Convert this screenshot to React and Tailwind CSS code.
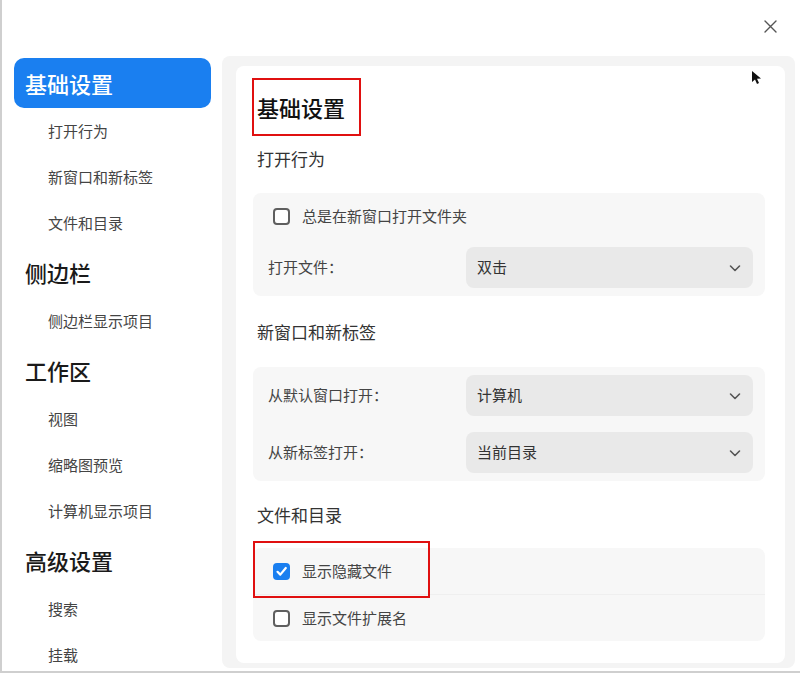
import React from 'react';

const sidebar = [
  { title: '基础设置', active: true, items: ['打开行为', '新窗口和新标签', '文件和目录'] },
  { title: '侧边栏', items: ['侧边栏显示项目'] },
  { title: '工作区', items: ['视图', '缩略图预览', '计算机显示项目'] },
  { title: '高级设置', items: ['搜索', '挂载'] },
];

const Chevron = () => (
  <svg width="14" height="14" viewBox="0 0 14 14" fill="none" stroke="#555" strokeWidth="1.6" strokeLinecap="round" strokeLinejoin="round">
    <path d="M2.5 5l4.5 4.5L11.5 5" />
  </svg>
);

const Checkbox = ({ checked }) => (
  checked ? (
    <span className="w-[17px] h-[17px] rounded-[4px] bg-[#1a7ff0] flex items-center justify-center">
      <svg width="13" height="13" viewBox="0 0 13 13" fill="none" stroke="white" strokeWidth="2.2" strokeLinecap="round" strokeLinejoin="round">
        <path d="M2.5 6.8l2.8 2.8L10.8 3" />
      </svg>
    </span>
  ) : (
    <span className="w-[17px] h-[17px] rounded-[4px] border-2 border-[#5f5f5f] bg-white" />
  )
);

const SelectRow = ({ label, value }) => (
  <div className="flex items-center py-[8px] pl-[15px] pr-[12px]">
    <span className="w-[198px] text-[15px] text-[#444]">{label}</span>
    <div className="flex-1 h-[41px] rounded-lg bg-[#e9e9e9] flex items-center justify-between pl-[11px] pr-[11px]">
      <span className="text-[15px] text-[#333]">{value}</span>
      <Chevron />
    </div>
  </div>
);

const CheckRow = ({ label, checked }) => (
  <div className="h-[46px] flex items-center pl-[20px] gap-[12px]">
    <Checkbox checked={checked} />
    <span className="text-[15px] text-[#444]">{label}</span>
  </div>
);

const SectionTitle = ({ children, className = '' }) => (
  <div className={`h-[38px] flex items-center pl-[21px] text-[17px] text-[#333] ${className}`}>{children}</div>
);

export default function App() {
  return (
    <div className="w-[800px] h-[673px] bg-white flex flex-col border-l-2 border-b-2 border-[#cfcfcf] font-['Noto_Sans_CJK_SC',sans-serif] overflow-hidden">
      <div className="h-[56px] shrink-0 flex justify-end items-start pt-[19px] pr-[22px]">
        <svg width="15" height="15" viewBox="0 0 15 15" fill="none" stroke="#555" strokeWidth="1.4" strokeLinecap="round">
          <path d="M2 2l11 11M13 2L2 13" />
        </svg>
      </div>
      <div className="flex flex-1 min-h-0">
        <div className="w-[220px] shrink-0 pl-[12px] pr-[9px] pt-[2px]">
          {sidebar.map((group) => (
            <div key={group.title}>
              <div className={`flex items-center pl-[11px] text-[22px] font-medium ${group.active ? 'h-[50px] w-[197px] bg-[#1a7ff0] text-white rounded-[10px]' : 'h-[52px] text-[#1a1a1a]'}`}>
                {group.title}
              </div>
              {group.items.map((item) => (
                <div key={item} className="h-[46px] flex items-center pl-[34px] text-[15px] text-[#444]">{item}</div>
              ))}
            </div>
          ))}
        </div>
        <div className="flex-1 mr-[5px] mb-[3px] bg-[#f4f4f4] rounded-lg pt-[10px] pl-[14px] pr-[10px] pb-[5px] flex">
          <div className="relative flex-1 bg-white rounded-lg pr-[20px]">
            <svg className="absolute left-[515px] top-[4px]" width="12" height="16" viewBox="0 0 12 16">
              <path d="M1 1l0 11 3-2.5 2 4.5 2-1-2-4.3 4-0.2z" fill="#111" />
            </svg>
            <div className="ml-[16px] mt-[12px] w-[109px] h-[58px] border-2 border-[#e01010] flex items-center pl-[3px] text-[22px] font-medium text-[#111]">
              基础设置
            </div>
            <SectionTitle className="mt-[4px]">打开行为</SectionTitle>
            <div className="ml-[17px] mt-[15px] bg-[#f7f7f7] rounded-lg">
              <CheckRow label="总是在新窗口打开文件夹" />
              <SelectRow label="打开文件：" value="双击" />
            </div>
            <SectionTitle className="mt-[17px]">新窗口和新标签</SectionTitle>
            <div className="ml-[17px] mt-[16px] bg-[#f7f7f7] rounded-lg">
              <SelectRow label="从默认窗口打开：" value="计算机" />
              <SelectRow label="从新标签打开：" value="当前目录" />
            </div>
            <SectionTitle className="mt-[15px]">文件和目录</SectionTitle>
            <div className="relative ml-[17px] mt-[14px] bg-[#f7f7f7] rounded-lg">
              <div className="border-b border-[#efefef]">
                <CheckRow label="显示隐藏文件" checked />
              </div>
              <CheckRow label="显示文件扩展名" />
              <div className="absolute left-0 top-[-7px] w-[177px] h-[57px] border-2 border-[#e01010]" />
            </div>
          </div>
        </div>
      </div>
    </div>
  );
}
